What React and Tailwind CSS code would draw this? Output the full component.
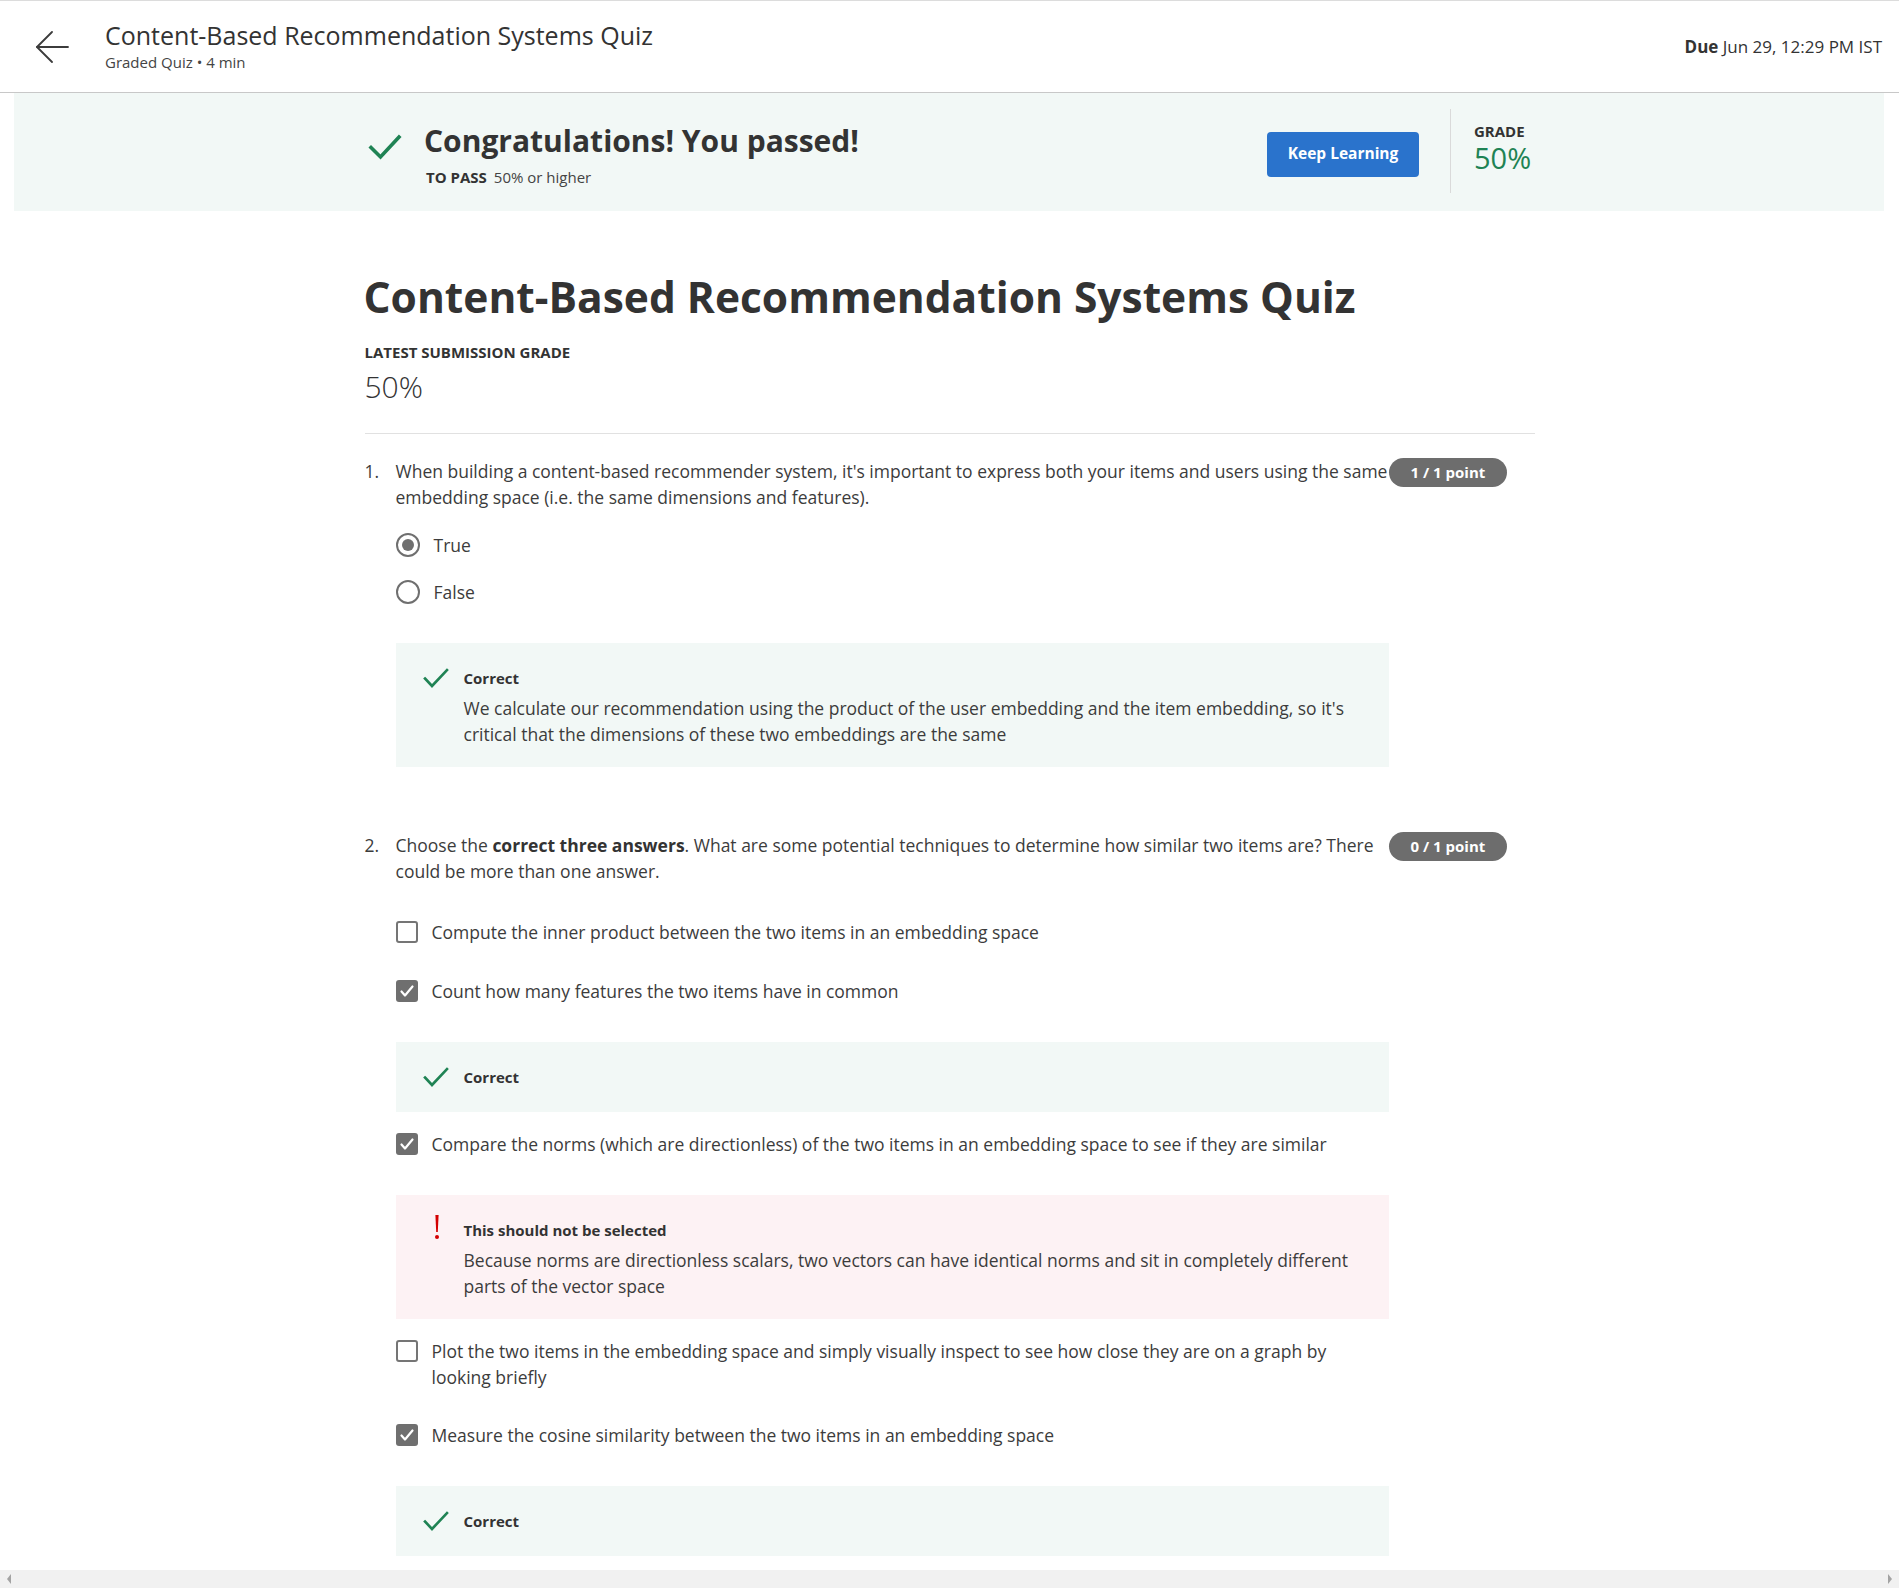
import { useState } from 'react'

const GREEN = '#1f8354'

function BackArrow() {
  return (
    <svg width="34" height="32" viewBox="0 0 34 32" fill="none" stroke="#3c3c3c" strokeWidth="1.8" strokeLinecap="round" strokeLinejoin="round">
      <path d="M33 16H2" />
      <path d="M17 1 2 16l15 15" />
    </svg>
  )
}

function BigCheck() {
  return (
    <svg width="34" height="26" viewBox="0 0 34 26" fill="none" stroke={GREEN} strokeWidth="3.6" strokeLinecap="square">
      <path d="M3 13.5 12.5 23 31 3" />
    </svg>
  )
}

function SmallCheck() {
  return (
    <svg width="26" height="20" viewBox="0 0 26 20" fill="none" stroke={GREEN} strokeWidth="2.6" strokeLinecap="square">
      <path d="M2 10.5 9 18 24 2" />
    </svg>
  )
}

function Bang() {
  return (
    <svg width="8" height="26" viewBox="0 0 8 26" fill="#d30001">
      <path d="M2.4 1h3.2l-.8 17H3.2z" />
      <circle cx="4" cy="23" r="2" />
    </svg>
  )
}

function Radio({ checked }) {
  return (
    <span className="w-6 h-6 shrink-0 rounded-full border-2 border-[#6f6f6f] flex items-center justify-center">
      {checked && <span className="w-3 h-3 rounded-full bg-[#6f6f6f]" />}
    </span>
  )
}

function Checkbox({ checked }) {
  if (checked) {
    return (
      <span className="w-[22px] h-[22px] shrink-0 rounded-[3px] bg-[#6f6f6f] flex items-center justify-center">
        <svg width="14" height="12" viewBox="0 0 14 12" fill="none" stroke="white" strokeWidth="2.2" strokeLinecap="round" strokeLinejoin="round">
          <path d="M1.5 6.5 5 10.5 12.5 1.5" />
        </svg>
      </span>
    )
  }
  return <span className="w-[22px] h-[22px] shrink-0 rounded-[3px] border-2 border-[#757575]" />
}

function Badge({ children }) {
  return (
    <span className="shrink-0 inline-flex items-center h-[29px] px-[22px] rounded-full bg-[#6d6d6d] text-white text-[15px] font-bold whitespace-nowrap">
      {children}
    </span>
  )
}

function Feedback({ kind, title, text, className = '' }) {
  const wrong = kind === 'wrong'
  return (
    <div className={`${wrong ? 'bg-[#fdf2f4]' : 'bg-[#f2f8f6]'} pl-[27px] pr-[27px] ${text ? 'pt-[25px] pb-[20px]' : 'py-[25px]'} ${className}`}>
      <div className="flex items-center h-[20px]">
        <span className="w-[41px] shrink-0 flex justify-start">
          {wrong ? <span className="pl-[10px] -mt-[6px]"><Bang /></span> : <SmallCheck />}
        </span>
        <span className="text-[15px] font-bold text-[#333] leading-[20px]">{title}</span>
      </div>
      {text && (
        <p className="ml-[41px] mt-[7px] text-[17.5px] leading-[26px] text-[#3c3c3c]">{text}</p>
      )}
    </div>
  )
}

function Option({ type, checked, children, className = '' }) {
  return (
    <div className={`flex items-start gap-[14px] ${className}`}>
      <span className="h-[26px] flex items-center">
        {type === 'radio' ? <Radio checked={checked} /> : <Checkbox checked={checked} />}
      </span>
      <span className="max-w-[910px] text-[17.5px] leading-[26px] text-[#3c3c3c]">{children}</span>
    </div>
  )
}

function Question({ num, points, prompt, children, className = '' }) {
  return (
    <div className={`flex items-start ${className}`}>
      <span className="w-[31px] shrink-0 text-[17.5px] leading-[26px] text-[#3c3c3c]">{num}.</span>
      <div className="w-[993px] shrink-0">
        <p className="text-[17.5px] leading-[26px] text-[#3c3c3c]">{prompt}</p>
        {children}
      </div>
      <Badge>{points}</Badge>
    </div>
  )
}

export default function App() {
  const [answers] = useState({ q1: 'true' })

  return (
    <div className="h-[1588px] w-[1899px] flex flex-col overflow-hidden bg-white font-['Open_Sans',sans-serif] text-[#373a3c]">
      {/* top bar */}
      <header className="h-[93px] shrink-0 border-t border-b border-t-[#dcdcdc] border-b-[#c8c8c8] flex items-center pl-[35px] pr-[17px]">
        <button className="w-[34px] h-[32px] flex items-center mr-[36px]">
          <BackArrow />
        </button>
        <div className="flex flex-col -mt-[4px]">
          <span className="text-[25px] leading-[32px] text-[#333]">Content-Based Recommendation Systems Quiz</span>
          <span className="text-[15px] leading-[18px] text-[#444] mt-[2px]">Graded Quiz • 4 min</span>
        </div>
        <span className="flex-1" />
        <span className="text-[17px] text-[#333]">
          <span className="font-bold">Due</span> Jun 29, 12:29 PM IST
        </span>
      </header>

      {/* pass banner */}
      <div className="shrink-0 ml-[14px] mr-[15px] h-[118px] bg-[#f2f8f6] flex items-center">
        <div className="w-[1170px] mx-auto flex items-center">
          <span className="ml-[4px] mr-[22px] -mt-[10px]">
            <BigCheck />
          </span>
          <div className="flex flex-col mt-[4px]">
            <h2 className="text-[30px] leading-[38px] font-bold text-[#333]">Congratulations! You passed!</h2>
            <p className="text-[15px] leading-[20px] mt-[7px] ml-[2px] text-[#444]">
              <span className="font-bold text-[#333]">TO PASS</span>
              <span className="ml-[7px]">50% or higher</span>
            </p>
          </div>
          <span className="flex-1" />
          <button className="h-[45px] w-[152px] mt-[4px] rounded-[4px] bg-[#2a73cc] text-white text-[15.5px] font-bold">
            Keep Learning
          </button>
          <span className="w-px h-[84px] bg-[#dadada] ml-[31px] mr-[23px] -mt-[2px]" />
          <div className="w-[60px] flex flex-col -mt-[8px]">
            <span className="text-[15px] font-bold leading-[18px] text-[#333]">GRADE</span>
            <span className="text-[29px] leading-[35px] text-[#1f8354]">50%</span>
          </div>
        </div>
      </div>

      {/* quiz body */}
      <main className="flex-1 overflow-hidden">
        <div className="w-[1170px] mx-auto pt-[60px]">
          <h1 className="text-[42.5px] leading-[52px] font-bold text-[#333] -ml-[1px]">
            Content-Based Recommendation Systems Quiz
          </h1>
          <div className="mt-[19px] text-[15px] leading-[20px] font-bold text-[#333]">LATEST SUBMISSION GRADE</div>
          <div className="mt-[7px] text-[30px] leading-[36px] font-light text-[#333]">50%</div>
          <div className="mt-[28px] h-px bg-[#e1e1e1]" />

          <Question
            className="mt-[24px]"
            num={1}
            points="1 / 1 point"
            prompt="When building a content-based recommender system, it's important to express both your items and users using the same embedding space (i.e. the same dimensions and features)."
          >
            <div className="mt-[22px] flex flex-col gap-[21px]">
              <Option type="radio" checked={answers.q1 === 'true'}>True</Option>
              <Option type="radio" checked={answers.q1 === 'false'}>False</Option>
            </div>
            <Feedback
              className="mt-[38px]"
              kind="correct"
              title="Correct"
              text="We calculate our recommendation using the product of the user embedding and the item embedding, so it's critical that the dimensions of these two embeddings are the same"
            />
          </Question>

          <Question
            className="mt-[65px]"
            num={2}
            points="0 / 1 point"
            prompt={
              <>
                Choose the <strong className="font-bold text-[#333]">correct three answers</strong>. What are some potential techniques to determine how similar two items are? There could be more than one answer.
              </>
            }
          >
            <Option className="mt-[35px]" type="checkbox">Compute the inner product between the two items in an embedding space</Option>
            <Option className="mt-[33px]" type="checkbox" checked>Count how many features the two items have in common</Option>
            <Feedback className="mt-[38px]" kind="correct" title="Correct" />
            <Option className="mt-[19px]" type="checkbox" checked>
              Compare the norms (which are directionless) of the two items in an embedding space to see if they are similar
            </Option>
            <Feedback
              className="mt-[38px]"
              kind="wrong"
              title="This should not be selected"
              text="Because norms are directionless scalars, two vectors can have identical norms and sit in completely different parts of the vector space"
            />
            <Option className="mt-[19px]" type="checkbox">
              Plot the two items in the embedding space and simply visually inspect to see how close they are on a graph by looking briefly
            </Option>
            <Option className="mt-[32px]" type="checkbox" checked>Measure the cosine similarity between the two items in an embedding space</Option>
            <Feedback className="mt-[38px]" kind="correct" title="Correct" />
          </Question>
        </div>
      </main>

      {/* horizontal scrollbar */}
      <div className="h-[18px] shrink-0 bg-[#f1f1f1] flex items-center justify-between px-[6px]">
        <svg width="6" height="10" viewBox="0 0 6 10" fill="#a3a3a3"><path d="M5 0 1 5l4 5z" /></svg>
        <svg width="6" height="10" viewBox="0 0 6 10" fill="#a3a3a3"><path d="M1 0l4 5-4 5z" /></svg>
      </div>
    </div>
  )
}
